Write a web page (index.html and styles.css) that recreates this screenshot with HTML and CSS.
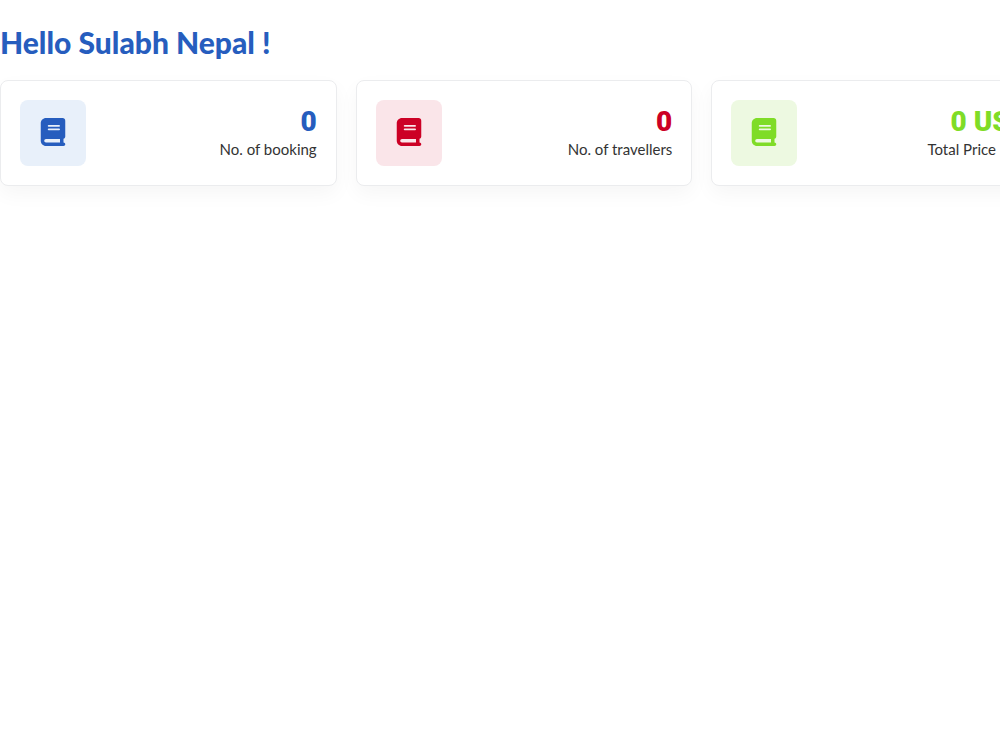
FILE: index.html
```html
<!DOCTYPE html>
<html lang="en">
<head>
  <meta charset="UTF-8">
  <meta name="viewport" content="width=device-width, initial-scale=1">
  <title>Dashboard</title>
  <link rel="stylesheet" href="styles.css">
</head>
<body>

  <!-- book icon, shared by all cards -->
  <svg class="sprite" aria-hidden="true">
    <symbol id="book" viewBox="0 0 448 512">
      <path fill="currentColor" d="M448 336V48c0-26.500-21.500-48-48-48H96C43 0 0 43 0 96v320c0 53 43 96 96 96h320c17.700 0 32-14.300 32-32s-14.300-32-32-32v-66.700c18.600-6.600 32-24.400 32-45.300zM144 128h192c8.800 0 16 7.200 16 16s-7.200 16-16 16H144c-8.800 0-16-7.200-16-16s7.200-16 16-16zm0 64h192c8.800 0 16 7.200 16 16s-7.200 16-16 16H144c-8.800 0-16-7.200-16-16s7.200-16 16-16zm208 256H96c-17.700 0-32-14.300-32-32s14.300-32 32-32h256v64z"/>
    </symbol>
  </svg>

  <main class="dashboard">
    <h1 class="greeting">Hello Sulabh Nepal !</h1>

    <div class="cards">
      <div class="card blue">
        <div class="card-icon"><svg><use href="#book"/></svg></div>
        <div class="card-info">
          <h2>0</h2>
          <p>No. of booking</p>
        </div>
      </div>

      <div class="card red">
        <div class="card-icon"><svg><use href="#book"/></svg></div>
        <div class="card-info">
          <h2>0</h2>
          <p>No. of travellers</p>
        </div>
      </div>

      <div class="card green">
        <div class="card-icon"><svg><use href="#book"/></svg></div>
        <div class="card-info">
          <h2>0 USD</h2>
          <p>Total Price Paid</p>
        </div>
      </div>
    </div>
  </main>

</body>
</html>
```
FILE: styles.css
```css
* {
  box-sizing: border-box;
}

body {
  margin: 0;
  min-height: 100vh;
  background: #fff;
  color: #333;
  font-family: Lato, "Liberation Sans", sans-serif;
  overflow-x: hidden;
}

.sprite {
  display: none;
}

.dashboard {
  padding-top: 24px;
}

.greeting {
  margin: 0 0 20px;
  color: #265dbe;
  font-size: 30px;
  font-weight: 900;
  line-height: 36px;
}

/* the row runs a little past the window */
.cards {
  display: flex;
  gap: 19px;
  width: calc(100% + 48px);
}

.card {
  flex: 1;
  display: flex;
  align-items: center;
  justify-content: space-between;
  padding: 19px;
  background: #fff;
  border: 1px solid #ebecee;
  border-radius: 8px;
  box-shadow: 0 8px 20px rgba(0, 0, 0, 0.04);
}

.card-icon {
  display: flex;
  align-items: center;
  justify-content: center;
  width: 66px;
  height: 66px;
  padding-bottom: 2px;
  border-radius: 8px;
}

.card-icon svg {
  width: 26px;
  height: 28px;
}

.card-info {
  text-align: right;
}

.card-info h2 {
  margin: 0;
  font-family: Roboto, sans-serif;
  font-size: 28px;
  font-weight: 900;
  line-height: 32px;
}

.card-info p {
  margin: 0;
  font-size: 15px;
  line-height: 22px;
}

.blue .card-icon,
.blue h2 {
  color: #265dbe;
}

.blue .card-icon {
  background: #e8f0fa;
}

.red .card-icon,
.red h2 {
  color: #cc0025;
}

.red .card-icon {
  background: #fae5e9;
}

.green .card-icon,
.green h2 {
  color: #7fdc27;
}

.green .card-icon {
  background: #edf9e1;
}
```
